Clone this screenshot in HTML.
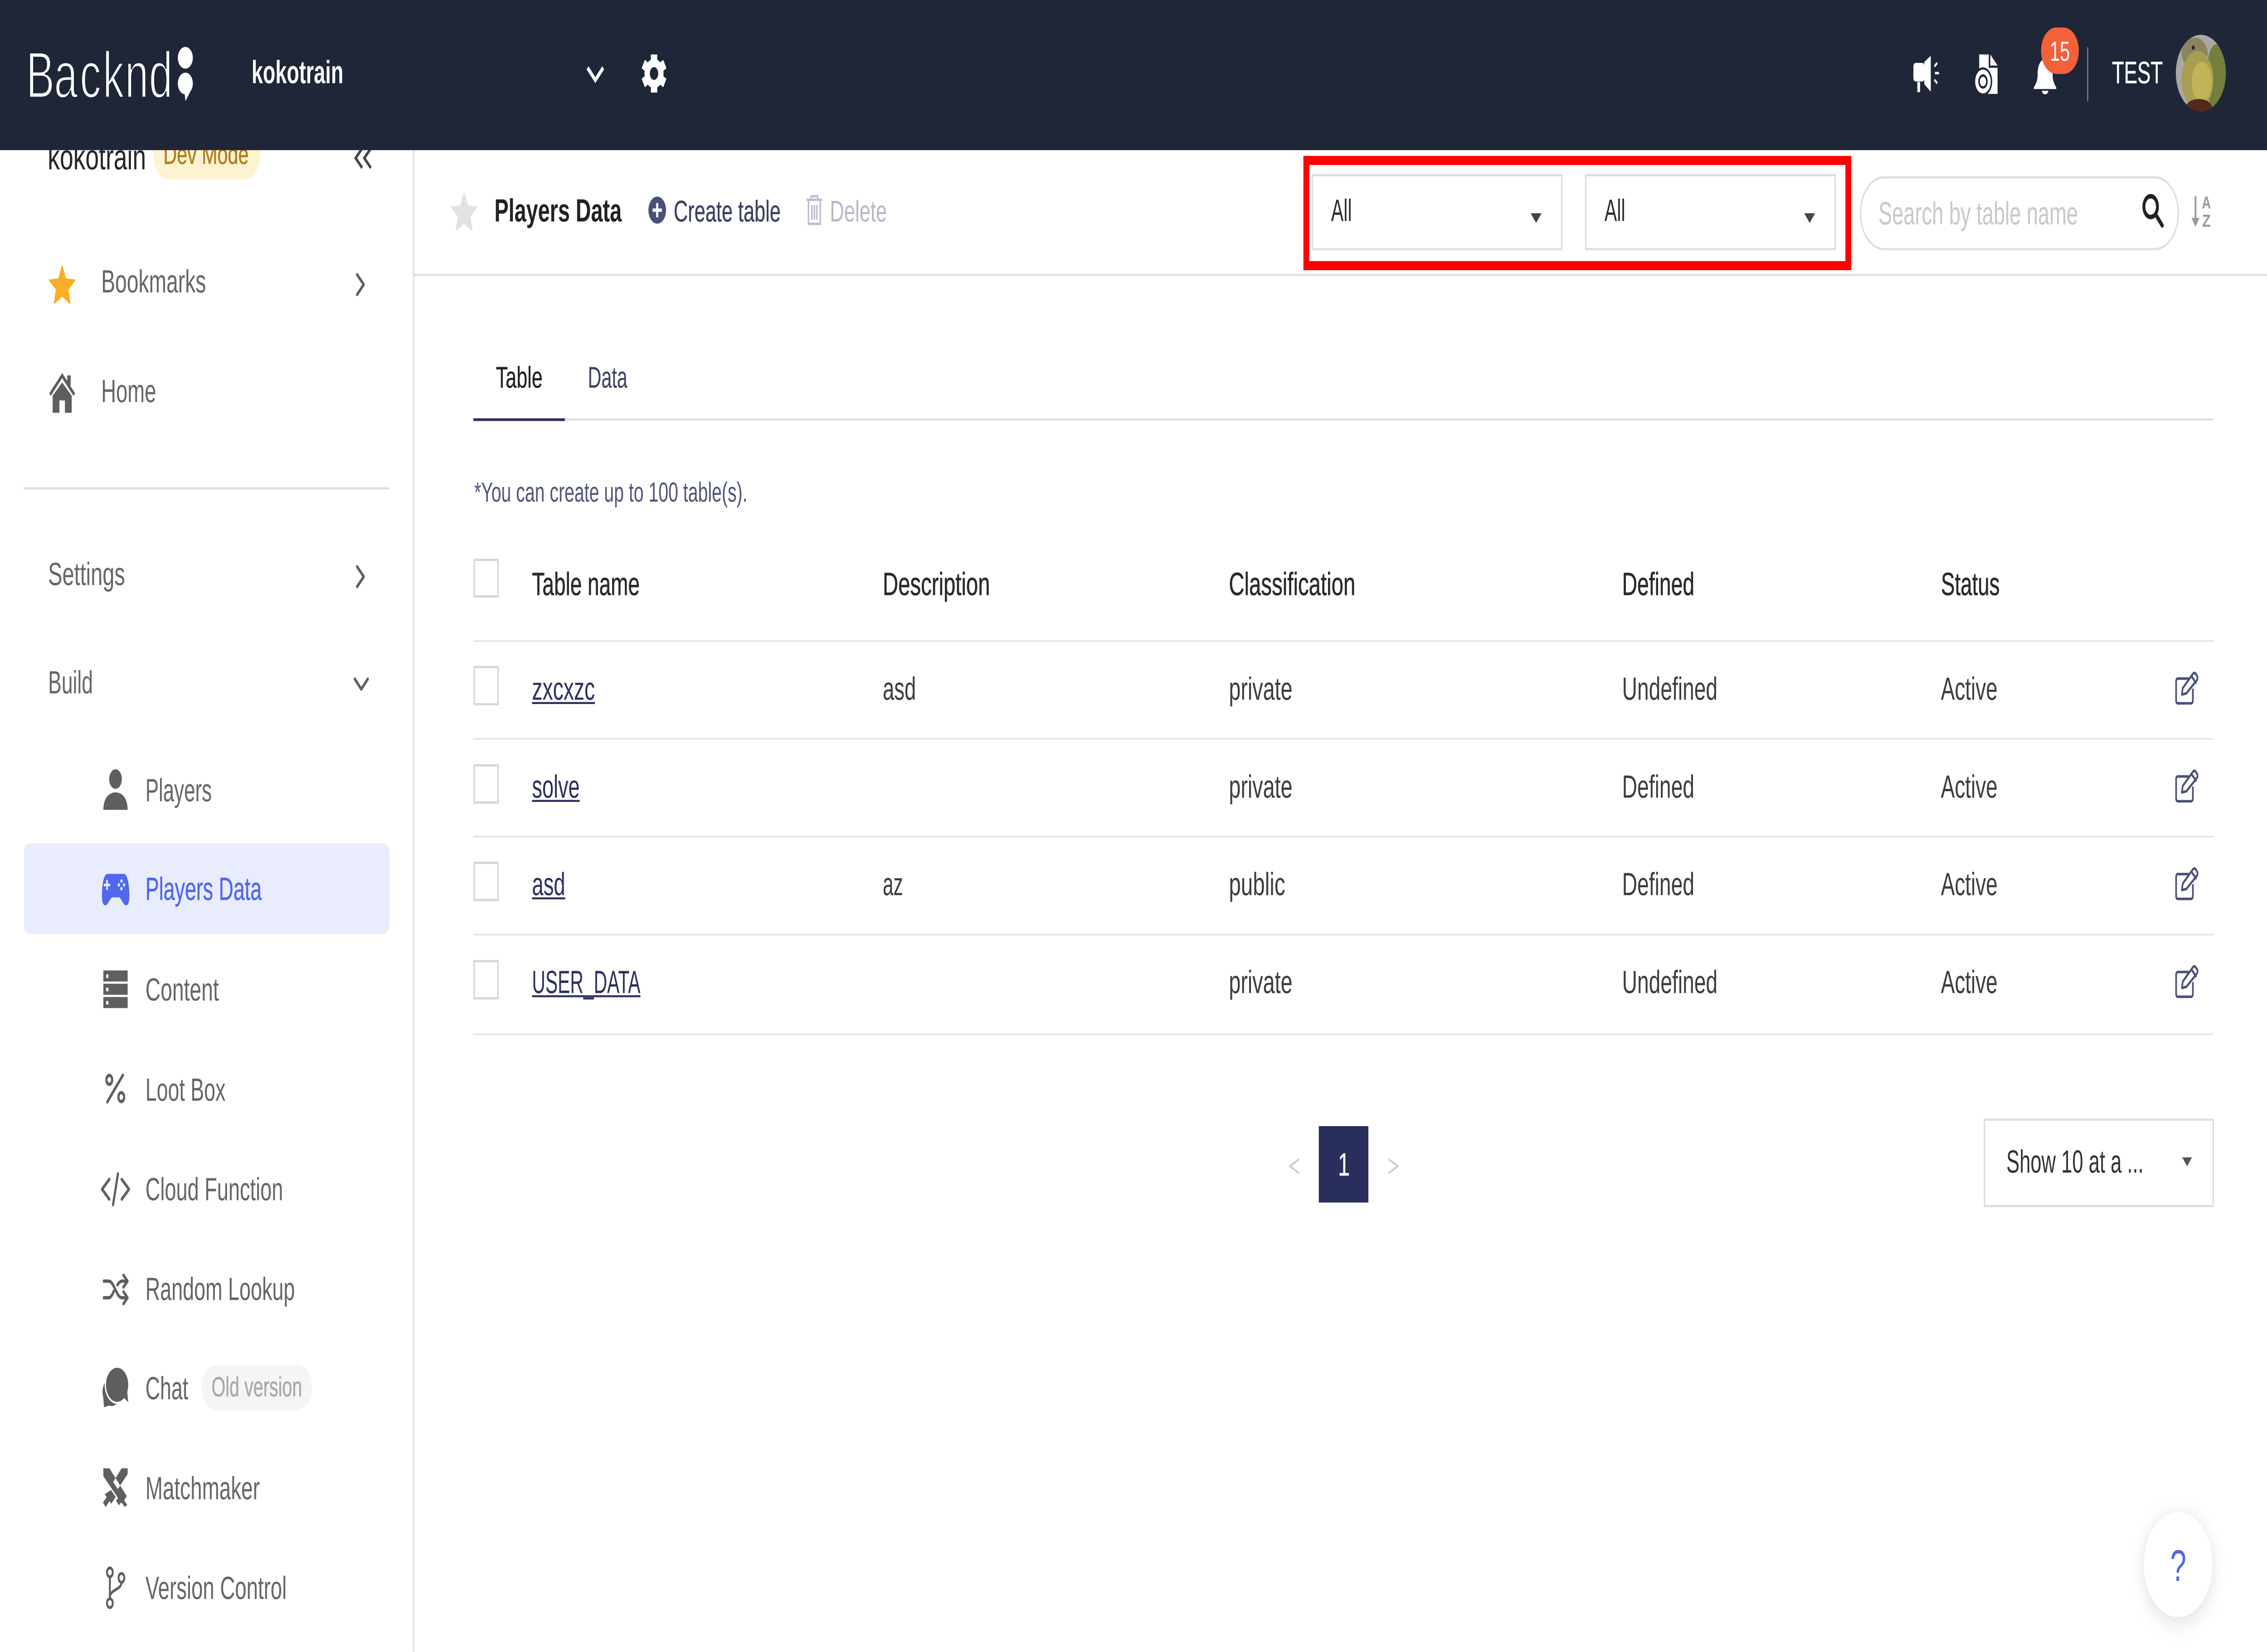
<!DOCTYPE html>
<html lang="en">
<head>
<meta charset="utf-8">
<title>Players Data</title>
<style>
html,body{margin:0;padding:0;background:#fff;width:100%;height:100%;overflow:hidden}
svg{display:block;width:100vw;height:100vh}
text{font-family:"Liberation Sans",sans-serif;text-rendering:geometricPrecision}
.side{font-size:14.5px;fill:#666}
.cell{font-size:14.5px;fill:#3d3d3d}
.head{font-size:14.5px;fill:#2a2a2a;stroke:#2a2a2a;stroke-width:.15px}
.link{font-size:14.5px;fill:#2b3060}
.ic{fill:#5f5f5f}
.st{fill:none;stroke:#5f5f5f;stroke-width:1.5;stroke-linecap:round;stroke-linejoin:round}
.ed{fill:none;stroke:#4b5079;stroke-width:1.15;stroke-linecap:round;stroke-linejoin:round}
</style>
</head>
<body>
<svg xmlns="http://www.w3.org/2000/svg" viewBox="0 0 1568.07 745.96" preserveAspectRatio="none">
<defs>
<clipPath id="av"><circle cx="1522.3" cy="33" r="17.3"/></clipPath>
<filter id="sh" x="-50%" y="-50%" width="200%" height="200%"><feDropShadow dx="0" dy="2" stdDeviation="5" flood-color="#000" flood-opacity=".13"/></filter>
</defs>

<!-- sidebar -->
<rect x="285.6" y="0" width="1" height="745.9" fill="#dedede"/>
<text x="33" y="76.5" font-size="16" fill="#262626" textLength="68" lengthAdjust="spacingAndGlyphs">kokotrain</text>
<rect x="106" y="55" width="74" height="26" rx="11" fill="#fdf3d0"/>
<text x="113" y="74" font-size="12.5" fill="#b07d1e" stroke="#b07d1e" stroke-width=".12" textLength="59" lengthAdjust="spacingAndGlyphs">Dev Mode</text>
<path d="M250.5 67l-4.5 4.4 4.5 4.4M256.5 67l-4.5 4.4 4.5 4.4" fill="none" stroke="#444" stroke-width="1.5"/>

<polygon transform="translate(43 129.4) scale(9.4)" fill="#fbae25" stroke="#fbae25" stroke-width=".06" stroke-linejoin="round" points="0,-1 .265,-.364 .951,-.309 .428,.139 .588,.809 0,.45 -.588,.809 -.428,.139 -.951,-.309 -.265,-.364"/>
<text class="side" x="70" y="132" textLength="72.5" lengthAdjust="spacingAndGlyphs">Bookmarks</text>
<path class="st" d="M247 124l4.6 4.5-4.6 4.5"/>

<path class="ic" d="M43 172.7l-6.6 6v7.7h4.7v-5.6h3.8v5.6h4.7v-7.7z"/>
<path d="M34.6 178.2 43 169.6l8.4 8.6" fill="none" stroke="#5f5f5f" stroke-width="1.6"/>
<rect x="46.5" y="169.5" width="2.4" height="4.5" fill="#5f5f5f"/>
<text class="side" x="70" y="181.6" textLength="38" lengthAdjust="spacingAndGlyphs">Home</text>

<rect x="16.3" y="220" width="253" height="1" fill="#dedede"/>

<text class="side" x="33.3" y="264.2" textLength="53.2" lengthAdjust="spacingAndGlyphs">Settings</text>
<path class="st" d="M247 255.9l4.6 4.5-4.6 4.5"/>
<text class="side" x="33.3" y="313.1" textLength="31" lengthAdjust="spacingAndGlyphs">Build</text>
<path class="st" d="M245.4 306.6l4.5 4.6 4.5-4.6"/>

<circle class="ic" cx="79.9" cy="351.8" r="4.4"/>
<path class="ic" d="M71.5 365.7c0-5 3.5-7.9 8.4-7.9s8.4 2.9 8.4 7.9z"/>
<text class="side" x="100.6" y="361.8" textLength="45.9" lengthAdjust="spacingAndGlyphs">Players</text>

<rect x="16.6" y="380.8" width="252.8" height="40.9" rx="4" fill="#e9ecfc"/>
<path fill="#5068ee" d="M74.3 394.6h11.4c2.5 0 3.8 5 3.8 10 0 3-1 4.2-2.5 4.2-1.6 0-3-3-4.5-3.6h-5c-1.5.6-2.9 3.6-4.5 3.6-1.5 0-2.5-1.2-2.5-4.2 0-5 1.3-10 3.8-10z"/>
<path d="M74 397.3v4.6M71.8 399.6h4.4" stroke="#e9ecfc" stroke-width="1.1"/>
<circle cx="84" cy="397.8" r=".8" fill="#e9ecfc"/><circle cx="84" cy="401.3" r=".8" fill="#e9ecfc"/><circle cx="82.2" cy="399.6" r=".8" fill="#e9ecfc"/><circle cx="85.8" cy="399.6" r=".8" fill="#e9ecfc"/>
<text x="100.6" y="406.4" font-size="14.5" fill="#5068ee" stroke="#5068ee" stroke-width=".12" textLength="80.4" lengthAdjust="spacingAndGlyphs">Players Data</text>

<rect class="ic" x="71.5" y="438.2" width="16.8" height="5"/><rect class="ic" x="71.5" y="444.2" width="16.8" height="5"/><rect class="ic" x="71.5" y="450.2" width="16.8" height="5"/>
<rect x="73.4" y="440" width="1.6" height="1.6" fill="#fff"/><rect x="73.4" y="446" width="1.6" height="1.6" fill="#fff"/><rect x="73.4" y="452" width="1.6" height="1.6" fill="#fff"/>
<text class="side" x="100.6" y="451.8" textLength="50.8" lengthAdjust="spacingAndGlyphs">Content</text>

<path class="st" d="M85 485.5 74.2 497.6"/><circle cx="75.6" cy="487.6" r="2" class="st"/><circle cx="83.9" cy="495.4" r="2" class="st"/>
<text class="side" x="100.6" y="497" textLength="55.4" lengthAdjust="spacingAndGlyphs">Loot Box</text>

<path class="st" d="M75.6 532.5l-5 4.5 5 4.5M84.2 532.5l5 4.5-5 4.5M81.6 530l-3.4 14"/>
<text class="side" x="100.6" y="542" textLength="95.2" lengthAdjust="spacingAndGlyphs">Cloud Function</text>

<path class="st" d="M71.8 578.5h3.4c3.8 0 5.2 7.5 9.2 7.5h3.2M71.8 586h3.4c1.5 0 2.6-1.4 3.5-3M81.2 580.2c1-1 2-1.7 3.2-1.7h3.2M85.4 575.8l2.8 2.7-2.8 2.7M85.4 583.3l2.8 2.7-2.8 2.7"/>
<text class="side" x="100.6" y="587" textLength="103.4" lengthAdjust="spacingAndGlyphs">Random Lookup</text>

<circle class="ic" cx="77.2" cy="628.6" r="6.3"/><path class="ic" d="M71 628l1 7.5 6-1.5z"/>
<circle cx="81" cy="625.3" r="8.6" fill="#fff"/>
<circle class="ic" cx="81" cy="625.3" r="7.7"/><path class="ic" d="M84 630l4.7 3.2-1-7z"/>
<text class="side" x="100.6" y="631.8" textLength="29.6" lengthAdjust="spacingAndGlyphs">Chat</text>
<rect x="139.4" y="616.3" width="76.4" height="20.5" rx="10.2" fill="#f5f5f5"/>
<text x="146.3" y="630.5" font-size="12.5" fill="#a8a8a8" stroke="#a8a8a8" stroke-width=".12" textLength="62.7" lengthAdjust="spacingAndGlyphs">Old version</text>

<path class="ic" d="M71.5 663h4.2l12 12.6-3.4 3.4-12.8-12.4zM88.3 663h-4.2l-5.8 6.2 3.2 3.2 6.8-6.8z"/>
<path class="ic" d="M76.8 672.8l3.2 3.2-3 3-1.4-1.2-2.4 2.7-2-2 2.6-2.5-1.3-1.3zM83.2 675l4.8 4.5-1.8 1-2.2-2.4-1.7 1.6-2-2z"/>
<text class="side" x="100.6" y="677" textLength="79.1" lengthAdjust="spacingAndGlyphs">Matchmaker</text>

<g fill="none" stroke="#5f5f5f" stroke-width="1.3"><circle cx="76" cy="710" r="2"/><circle cx="84" cy="712.5" r="2"/><circle cx="76" cy="723.9" r="2"/><path d="M76 712v9.9M84 714.5c0 3.6-8 3-8 6.9"/></g>
<text class="side" x="100.6" y="722" textLength="97.7" lengthAdjust="spacingAndGlyphs">Version Control</text>

<!-- header -->
<rect width="1568.06" height="67.8" fill="#1f2638"/>
<text x="18.1 37.4 55.2 71.1 86.4 103" y="44" font-size="29.4" fill="#fff" stroke="#1f2638" stroke-width=".7">Backnd</text>
<ellipse cx="128.2" cy="26.1" rx="5.2" ry="4.9" fill="#fff"/>
<ellipse cx="128.2" cy="37.7" rx="5.2" ry="4.9" fill="#fff"/>
<path d="M131.5 41.5l-3.2 4.2-.5-3z" fill="#fff"/>
<text x="174" y="37.6" font-size="14.5" font-weight="700" fill="#fff" textLength="63.5" lengthAdjust="spacingAndGlyphs">kokotrain</text>
<path d="M406.4 30.6l5.4 5.6 5.4-5.6" fill="none" stroke="#fff" stroke-width="1.9"/>
<!-- gear -->
<g fill="#fff" transform="translate(452.4 33.2)">
<circle r="6.6"/>
<rect x="-2.2" y="-8.6" width="4.4" height="17.2"/>
<rect x="-2.2" y="-8.6" width="4.4" height="17.2" transform="rotate(60)"/>
<rect x="-2.2" y="-8.6" width="4.4" height="17.2" transform="rotate(120)"/>
<circle r="2.9" fill="#1f2638"/>
</g>

<!-- megaphone -->
<rect x="1323.5" y="28.4" width="7.6" height="8.4" rx="1.5" fill="#fff"/>
<path fill="#fff" d="M1331 28l4.5-2.8v16.2l-4.5-3.4z"/>
<rect x="1326.2" y="37" width="1.9" height="4.6" fill="#fff"/>
<path d="M1338 30l2-1.6M1338.4 33h2.8M1338 36l2 1.6" stroke="#fff" stroke-width="1.1"/>
<!-- file -->
<path fill="#fff" d="M1369 24.6h6.6v6h6.1v11.8h-12.7z"/><path fill="#fff" d="M1376.7 24.6l5 5h-5z"/>
<circle cx="1371.6" cy="36.8" r="6.4" fill="#1f2638"/><circle cx="1371.6" cy="36.8" r="5.4" fill="#fff"/>
<circle cx="1371.6" cy="36.8" r="2.7" fill="none" stroke="#1f2638" stroke-width="1.1"/>
<!-- bell -->
<path fill="#fff" d="M1414.6 26.3c-4 1-5.2 4-5.2 7.5 0 3-1.7 4.6-2.6 5.7v.7h15.5v-.7c-.9-1.1-2.5-2.7-2.5-5.7 0-3.5-1.2-6.5-5.2-7.5z"/>
<path fill="#fff" d="M1412.4 41h4.4a2.2 1.6 0 0 1-4.4 0z"/>
<rect x="1411.8" y="12.4" width="26.1" height="21" rx="10.5" fill="#f4603a"/>
<text x="1424.8" y="27.4" font-size="12.5" fill="#fff" text-anchor="middle">15</text>
<rect x="1443.6" y="21.3" width=".9" height="24.5" fill="#70747f"/>
<text x="1460.8" y="37.6" font-size="14" fill="#fff" stroke="#fff" stroke-width=".12" textLength="35.2" lengthAdjust="spacingAndGlyphs">TEST</text>
<!-- avatar -->
<g clip-path="url(#av)">
<rect x="1505" y="15" width="35" height="36" fill="#a9a9a4"/>
<ellipse cx="1533" cy="35" rx="7" ry="15" fill="#737f3a"/>
<ellipse cx="1518" cy="24" rx="9" ry="7" fill="#8b8460"/>
<ellipse cx="1520" cy="36" rx="11" ry="13" fill="#a89d50"/>
<ellipse cx="1523" cy="37" rx="7" ry="9" fill="#c1b357"/>
<ellipse cx="1521" cy="48.5" rx="9" ry="3.8" fill="#54281a"/>
<circle cx="1517" cy="21.5" r="1" fill="#2c2620"/>
</g>

<!-- sub header -->
<rect x="286" y="123.7" width="1282" height=".9" fill="#dedede"/>
<polygon transform="translate(321 96.4) scale(9.4)" fill="#e2e2e2" stroke="#e2e2e2" stroke-width=".06" stroke-linejoin="round" points="0,-1 .265,-.364 .951,-.309 .428,.139 .588,.809 0,.45 -.588,.809 -.428,.139 -.951,-.309 -.265,-.364"/>
<text x="342" y="100" font-size="14.5" font-weight="700" fill="#222" textLength="88" lengthAdjust="spacingAndGlyphs">Players Data</text>
<circle cx="454.6" cy="94.9" r="6.1" fill="#4b5079"/>
<path d="M454.6 91.7v6.4M451.4 94.9h6.4" stroke="#fff" stroke-width="1.5"/>
<text x="466" y="100" font-size="13.5" fill="#3c4163" stroke="#3c4163" stroke-width=".1" textLength="74" lengthAdjust="spacingAndGlyphs">Create table</text>
<path d="M558 90.2h10.6M561 90v-1.4h4.6V90M559.2 90.5v10.6h8.2V90.5M561.6 92.6v6.6M563.3 92.6v6.6M565 92.6v6.6" fill="none" stroke="#b9bccc" stroke-width="1"/>
<text x="574" y="100" font-size="13.5" fill="#b5b8ca" textLength="39.5" lengthAdjust="spacingAndGlyphs">Delete</text>

<!-- red box -->
<rect x="903.6" y="72.45" width="374.9" height="47.5" fill="none" stroke="#ff0000" stroke-width="4.1"/>

<rect x="907.7" y="79.1" width="172.5" height="33.4" fill="#fff" stroke="#dedede" stroke-width="1"/>
<text x="920.7" y="99.8" font-size="14" fill="#2d2d2d" textLength="14.4" lengthAdjust="spacingAndGlyphs">All</text>
<polygon points="1058.8,96.3 1066.3,96.3 1062.5,100.7" fill="#444"/>
<rect x="1096.8" y="79.1" width="172.6" height="33.4" fill="#fff" stroke="#dedede" stroke-width="1"/>
<text x="1109.8" y="99.8" font-size="14" fill="#2d2d2d" textLength="14.4" lengthAdjust="spacingAndGlyphs">All</text>
<polygon points="1248,96.3 1255.5,96.3 1251.7,100.7" fill="#444"/>

<rect x="1286.9" y="80.1" width="219.8" height="32.4" rx="16.2" fill="#fff" stroke="#dedede" stroke-width="1"/>
<text x="1299.3" y="101.3" font-size="14.5" fill="#c8c8c8" textLength="138" lengthAdjust="spacingAndGlyphs">Search by table name</text>
<circle cx="1487.6" cy="93.3" r="4.7" fill="none" stroke="#222" stroke-width="2"/>
<path d="M1491 96.8l4.6 5" stroke="#222" stroke-width="2.1" stroke-linecap="round"/>
<path d="M1518.6 88.6v12" stroke="#999" stroke-width="1.2"/><polygon points="1515.8,98.4 1521.4,98.4 1518.6,102.4" fill="#999"/>
<text x="1523" y="94.2" font-size="7.8" font-weight="700" fill="#999" textLength="6.3" lengthAdjust="spacingAndGlyphs">A</text>
<text x="1523.2" y="102.4" font-size="7.8" font-weight="700" fill="#999" textLength="6" lengthAdjust="spacingAndGlyphs">Z</text>

<!-- tabs -->
<text x="343" y="175" font-size="13.5" fill="#222" stroke="#222" stroke-width=".1" textLength="32.3" lengthAdjust="spacingAndGlyphs">Table</text>
<text x="406.6" y="175" font-size="13.5" fill="#3c4163" textLength="27.4" lengthAdjust="spacingAndGlyphs">Data</text>
<rect x="327.4" y="189" width="1203.8" height=".9" fill="#dedede"/>
<rect x="327.4" y="188.9" width="63.3" height="1.2" fill="#292e5d"/>

<text x="328" y="226.5" font-size="12.5" fill="#50557a" textLength="189" lengthAdjust="spacingAndGlyphs">*You can create up to 100 table(s).</text>

<!-- table -->
<rect x="328" y="252.8" width="16.5" height="16.5" fill="#fff" stroke="#d6d6d6" stroke-width="1"/>
<text class="head" x="368" y="268.7" textLength="74.5" lengthAdjust="spacingAndGlyphs">Table name</text>
<text class="head" x="610.6" y="268.7" textLength="74.2" lengthAdjust="spacingAndGlyphs">Description</text>
<text class="head" x="850" y="268.7" textLength="87.5" lengthAdjust="spacingAndGlyphs">Classification</text>
<text class="head" x="1122" y="268.7" textLength="50" lengthAdjust="spacingAndGlyphs">Defined</text>
<text class="head" x="1342.6" y="268.7" textLength="40.6" lengthAdjust="spacingAndGlyphs">Status</text>

<g fill="#e6e6e6">
<rect x="327.4" y="289.1" width="1203.8" height=".8"/>
<rect x="327.4" y="333.2" width="1203.8" height=".8"/>
<rect x="327.4" y="377.4" width="1203.8" height=".8"/>
<rect x="327.4" y="421.6" width="1203.8" height=".8"/>
<rect x="327.4" y="466.6" width="1203.8" height=".8"/>
</g>

<g fill="#fff" stroke="#d6d6d6" stroke-width="1">
<rect x="328" y="301.2" width="16.5" height="16.8"/>
<rect x="328" y="345.6" width="16.5" height="16.8"/>
<rect x="328" y="389.6" width="16.5" height="16.8"/>
<rect x="328" y="434" width="16.5" height="16.8"/>
</g>

<text class="link" x="368" y="316" textLength="43.5" lengthAdjust="spacingAndGlyphs">zxcxzc</text><rect x="368" y="317" width="43.5" height=".9" fill="#2b3060"/>
<text class="cell" x="610.6" y="316" textLength="23" lengthAdjust="spacingAndGlyphs">asd</text>
<text class="cell" x="850" y="316" textLength="44" lengthAdjust="spacingAndGlyphs">private</text>
<text class="cell" x="1122" y="316" textLength="66" lengthAdjust="spacingAndGlyphs">Undefined</text>
<text class="cell" x="1342.5" y="316" textLength="39.2" lengthAdjust="spacingAndGlyphs">Active</text>

<text class="link" x="368" y="360.2" textLength="33" lengthAdjust="spacingAndGlyphs">solve</text><rect x="368" y="361.2" width="33" height=".9" fill="#2b3060"/>
<text class="cell" x="850" y="360.2" textLength="44" lengthAdjust="spacingAndGlyphs">private</text>
<text class="cell" x="1122" y="360.2" textLength="50" lengthAdjust="spacingAndGlyphs">Defined</text>
<text class="cell" x="1342.5" y="360.2" textLength="39.2" lengthAdjust="spacingAndGlyphs">Active</text>

<text class="link" x="368" y="404.2" textLength="23" lengthAdjust="spacingAndGlyphs">asd</text><rect x="368" y="405.2" width="23" height=".9" fill="#2b3060"/>
<text class="cell" x="610.6" y="404.2" textLength="14" lengthAdjust="spacingAndGlyphs">az</text>
<text class="cell" x="850" y="404.2" textLength="39" lengthAdjust="spacingAndGlyphs">public</text>
<text class="cell" x="1122" y="404.2" textLength="50" lengthAdjust="spacingAndGlyphs">Defined</text>
<text class="cell" x="1342.5" y="404.2" textLength="39.2" lengthAdjust="spacingAndGlyphs">Active</text>

<text class="link" x="368" y="448.4" textLength="75" lengthAdjust="spacingAndGlyphs">USER_DATA</text><rect x="368" y="449.4" width="75" height=".9" fill="#2b3060"/>
<text class="cell" x="850" y="448.4" textLength="44" lengthAdjust="spacingAndGlyphs">private</text>
<text class="cell" x="1122" y="448.4" textLength="66" lengthAdjust="spacingAndGlyphs">Undefined</text>
<text class="cell" x="1342.5" y="448.4" textLength="39.2" lengthAdjust="spacingAndGlyphs">Active</text>

<g transform="translate(1504.6 303.4)"><path class="ed" d="M9 3H1.8A1.2 1.2 0 0 0 .6 4.2V13a1.2 1.2 0 0 0 1.2 1.2H11a1.2 1.2 0 0 0 1.2-1.2V8"/><path class="ed" d="M4.6 10.2l.6-2.9 7-6.4a1.4 1.4 0 0 1 2 0l.8.8a1.4 1.4 0 0 1 0 2l-7.3 6z"/><path class="ed" d="M11.2 1.9l3.1 3"/></g>
<g transform="translate(1504.6 347.6)"><path class="ed" d="M9 3H1.8A1.2 1.2 0 0 0 .6 4.2V13a1.2 1.2 0 0 0 1.2 1.2H11a1.2 1.2 0 0 0 1.2-1.2V8"/><path class="ed" d="M4.6 10.2l.6-2.9 7-6.4a1.4 1.4 0 0 1 2 0l.8.8a1.4 1.4 0 0 1 0 2l-7.3 6z"/><path class="ed" d="M11.2 1.9l3.1 3"/></g>
<g transform="translate(1504.6 391.7)"><path class="ed" d="M9 3H1.8A1.2 1.2 0 0 0 .6 4.2V13a1.2 1.2 0 0 0 1.2 1.2H11a1.2 1.2 0 0 0 1.2-1.2V8"/><path class="ed" d="M4.6 10.2l.6-2.9 7-6.4a1.4 1.4 0 0 1 2 0l.8.8a1.4 1.4 0 0 1 0 2l-7.3 6z"/><path class="ed" d="M11.2 1.9l3.1 3"/></g>
<g transform="translate(1504.6 435.9)"><path class="ed" d="M9 3H1.8A1.2 1.2 0 0 0 .6 4.2V13a1.2 1.2 0 0 0 1.2 1.2H11a1.2 1.2 0 0 0 1.2-1.2V8"/><path class="ed" d="M4.6 10.2l.6-2.9 7-6.4a1.4 1.4 0 0 1 2 0l.8.8a1.4 1.4 0 0 1 0 2l-7.3 6z"/><path class="ed" d="M11.2 1.9l3.1 3"/></g>

<!-- pagination -->
<path d="M898.6 523.4l-6.4 3.2 6.4 3.2" fill="none" stroke="#cfcfcf" stroke-width="1"/>
<rect x="912.2" y="508.5" width="34.3" height="34.5" fill="#292e5d"/>
<text x="929.6" y="530.8" font-size="14.5" fill="#fff" stroke="#fff" stroke-width=".15" text-anchor="middle">1</text>
<path d="M960.4 523.4l6.4 3.2-6.4 3.2" fill="none" stroke="#cfcfcf" stroke-width="1"/>

<rect x="1372.7" y="505.6" width="158.2" height="39" fill="#fff" stroke="#dedede" stroke-width="1"/>
<text x="1387.8" y="529.5" font-size="14.5" fill="#333" textLength="94.9" lengthAdjust="spacingAndGlyphs">Show 10 at a ...</text>
<polygon points="1509.4,522.6 1516.2,522.6 1512.8,526.6" fill="#555"/>

<!-- help -->
<circle cx="1506.6" cy="706.5" r="23.7" fill="#fff" filter="url(#sh)"/>
<text x="1506.7" y="713.8" font-size="20" fill="#5068ee" text-anchor="middle">?</text>
</svg>
</body>
</html>
